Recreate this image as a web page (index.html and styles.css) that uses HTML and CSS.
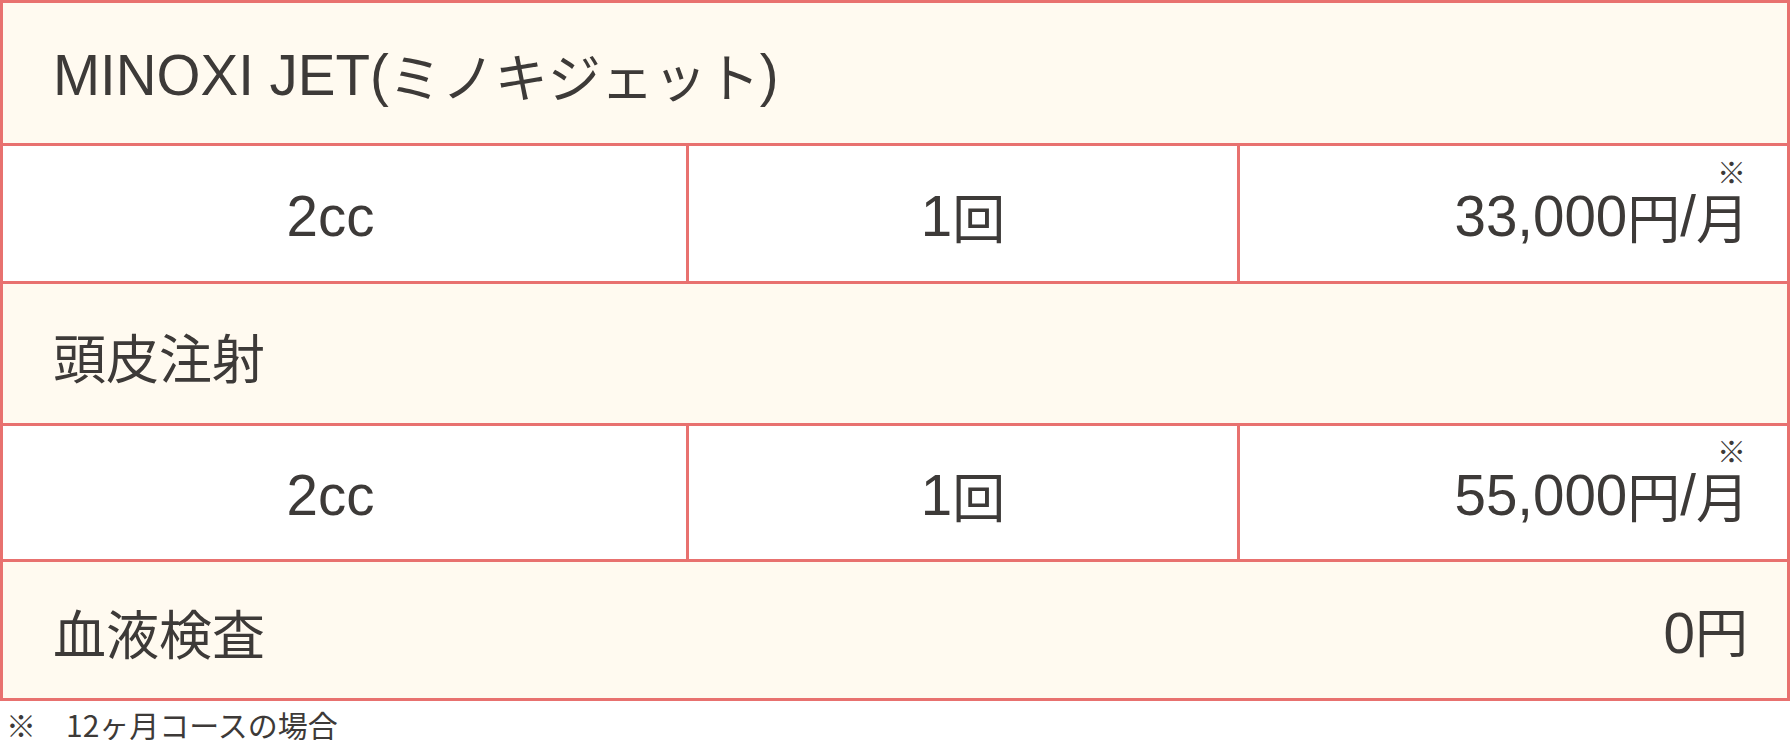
FILE: index.html
```html
<!DOCTYPE html>
<html lang="ja">
<head>
<meta charset="utf-8">
<title>料金表</title>
<link rel="stylesheet" href="styles.css">
</head>
<body>
<section class="price">
  <div class="price-table">
    <div class="cell head span3"><span class="en">MINOXI JET(</span>ミノキジェット<span class="en">)</span></div>
    <div class="cell amount"><span class="en">2cc</span></div>
    <div class="cell count"><span class="en">1</span>回</div>
    <div class="cell fee"><span class="en">33,000</span>円<span class="en">/</span><span class="mark">月<span class="kome">※</span></span></div>

    <div class="cell head span3">頭皮注射</div>
    <div class="cell amount row4"><span class="en">2cc</span></div>
    <div class="cell count row4"><span class="en">1</span>回</div>
    <div class="cell fee row4"><span class="en">55,000</span>円<span class="en">/</span><span class="mark">月<span class="kome">※</span></span></div>

    <div class="cell head span3 last"><span>血液検査</span><span class="total"><span class="en">0</span>円</span></div>
  </div>
  <p class="note">※　12ヶ月コースの場合</p>
</section>
</body>
</html>
```

FILE: styles.css
```css
html, body {
  margin: 0;
  padding: 0;
  background: #ffffff;
}

body {
  font-family: "Noto Sans CJK JP", "Liberation Sans", sans-serif;
  color: #3d3a38;
}

.price {
  width: 1790px;
}

.price-table {
  display: grid;
  grid-template-columns: 683px 548px 547px;
  grid-template-rows: 140px 135px 139px 133px 136px;
  gap: 3px;
  padding: 3px;
  background: #e8716f;
  font-size: 53px;
  line-height: 1.2;
}

.cell {
  display: flex;
  align-items: center;
  padding-top: 6px;
  background: #ffffff;
  white-space: nowrap;
}

.en {
  font-family: "Liberation Sans", sans-serif;
  font-size: 56.5px;
}

.head {
  background: #fffaf0;
  padding-left: 50px;
}

.span3 {
  grid-column: 1 / 4;
}

.amount {
  justify-content: center;
  padding-right: 28px;
}

.count {
  justify-content: center;
}

.fee {
  justify-content: flex-end;
  padding-right: 38px;
}

.mark {
  position: relative;
  display: inline-block;
  line-height: 1;
}

.kome {
  position: absolute;
  right: 3px;
  top: -33px;
  font-size: 29px;
  font-weight: 700;
  line-height: 1;
}

.last {
  justify-content: space-between;
  padding-right: 39px;
}

.note {
  margin: 2px 0 0 0;
  padding-left: 6px;
  font-family: "Noto Sans CJK JP", "Liberation Sans", sans-serif;
  font-size: 30px;
  line-height: 1.4;
  letter-spacing: 0;
}
```
